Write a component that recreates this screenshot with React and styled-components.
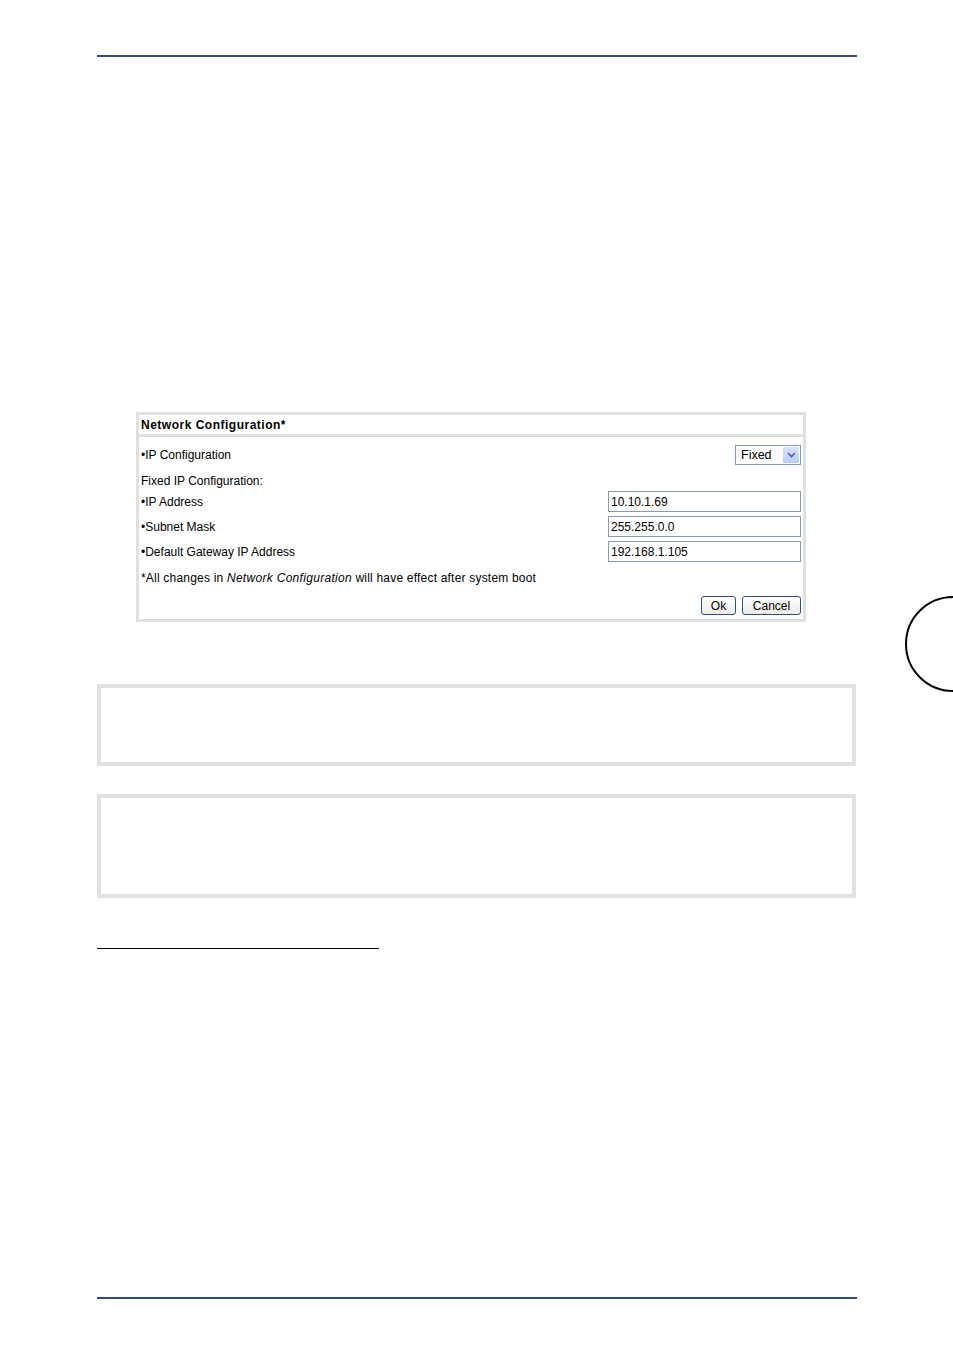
import styled, { createGlobalStyle } from "styled-components";

const Global = createGlobalStyle`
  html, body {
    margin: 0;
    padding: 0;
    background: #fff;
  }
  * {
    box-sizing: border-box;
  }
`;

const Sheet = styled.div`
  position: relative;
  width: 953px;
  height: 1352px;
  overflow: hidden;
  font-family: "Liberation Sans", Arial, sans-serif;
  color: #000;
`;

const Column = styled.div`
  width: 760px;
  margin-left: 97px;
  padding-top: 55px;
  display: flex;
  flex-direction: column;
`;

const Rule = styled.div`
  height: 2px;
  background: #34497a;
`;

const Gap = styled.div`
  height: ${(p) => p.$h}px;
  flex: none;
`;

const Panel = styled.div`
  margin-left: 39px;
  width: 670px;
  border: 3px solid #e0e0e0;
  display: flex;
  flex-direction: column;
  font-size: 12px;
`;

const PanelTitle = styled.div`
  height: 19px;
  padding: 0 2px;
  display: flex;
  align-items: center;
  font-weight: bold;
  font-size: 12px;
  letter-spacing: 0.5px;
`;

const Divider = styled.div`
  height: 3px;
  background: #e0e0e0;
`;

const Row = styled.div`
  height: ${(p) => p.$h}px;
  padding: 0 2px;
  display: flex;
  align-items: center;
  justify-content: space-between;
  white-space: nowrap;
`;

const Note = styled.span`
  letter-spacing: 0.2px;
  i {
    letter-spacing: 0.3px;
  }
`;

const Select = styled.div`
  width: 66px;
  height: 20px;
  border: 1px solid #7f9db9;
  display: flex;
  align-items: center;
  justify-content: space-between;
  padding-left: 5px;
  padding-right: 1px;
  font-size: 12.5px;
`;

const Arrow = styled.div`
  width: 16px;
  height: 16px;
  background: linear-gradient(#d6e2fd, #b9cdf9);
  border-radius: 1px;
  display: flex;
  align-items: center;
  justify-content: center;
`;

const Field = styled.div`
  width: 193px;
  height: 21px;
  border: 1px solid #7f9db9;
  padding-left: 2px;
  display: flex;
  align-items: center;
  font-size: 12px;
`;

const Buttons = styled.div`
  display: flex;
  gap: 6px;
  margin-left: auto;
`;

const Button = styled.div`
  width: ${(p) => p.$w}px;
  height: 19px;
  border: 1px solid #2b5089;
  border-radius: 3px;
  background: linear-gradient(#ffffff, #ecebe6);
  display: flex;
  align-items: center;
  justify-content: center;
  font-size: 12px;
`;

const Box = styled.div`
  width: 759px;
  height: ${(p) => p.$h}px;
  border: 4px solid #e2e2e2;
`;

const Footnote = styled.div`
  width: 282px;
  height: 1px;
  background: #000;
`;

const Tab = styled.div`
  position: absolute;
  left: 905px;
  top: 596px;
  width: 96px;
  height: 96px;
  border: 2px solid #000;
  border-radius: 50%;
`;

const rows = [
  { label: "•IP Address", value: "10.10.1.69" },
  { label: "•Subnet Mask", value: "255.255.0.0" },
  { label: "•Default Gateway IP Address", value: "192.168.1.105" },
];

export default function App() {
  return (
    <Sheet>
      <Global />
      <Column>
        <Rule />
        <Gap $h={355} />
        <Panel>
          <PanelTitle>Network Configuration*</PanelTitle>
          <Divider />
          <Row $h={36}>
            <span>•IP Configuration</span>
            <Select>
              <span>Fixed</span>
              <Arrow>
                <svg width="9" height="6" viewBox="0 0 9 6">
                  <path d="M1 1 L4.5 4.5 L8 1" fill="none" stroke="#4d6185" strokeWidth="1.6" />
                </svg>
              </Arrow>
            </Select>
          </Row>
          <Row $h={16}>Fixed IP Configuration:</Row>
          {rows.map(({ label, value }) => (
            <Row $h={25} key={label}>
              <span>{label}</span>
              <Field>{value}</Field>
            </Row>
          ))}
          <Row $h={28}>
            <Note>
              *All changes in <i>Network Configuration</i> will have effect after system boot
            </Note>
          </Row>
          <Row $h={27}>
            <Buttons>
              <Button $w={35}>Ok</Button>
              <Button $w={59}>Cancel</Button>
            </Buttons>
          </Row>
        </Panel>
        <Gap $h={62} />
        <Box $h={82} />
        <Gap $h={28} />
        <Box $h={104} />
        <Gap $h={50} />
        <Footnote />
        <Gap $h={348} />
        <Rule />
      </Column>
      <Tab />
    </Sheet>
  );
}
